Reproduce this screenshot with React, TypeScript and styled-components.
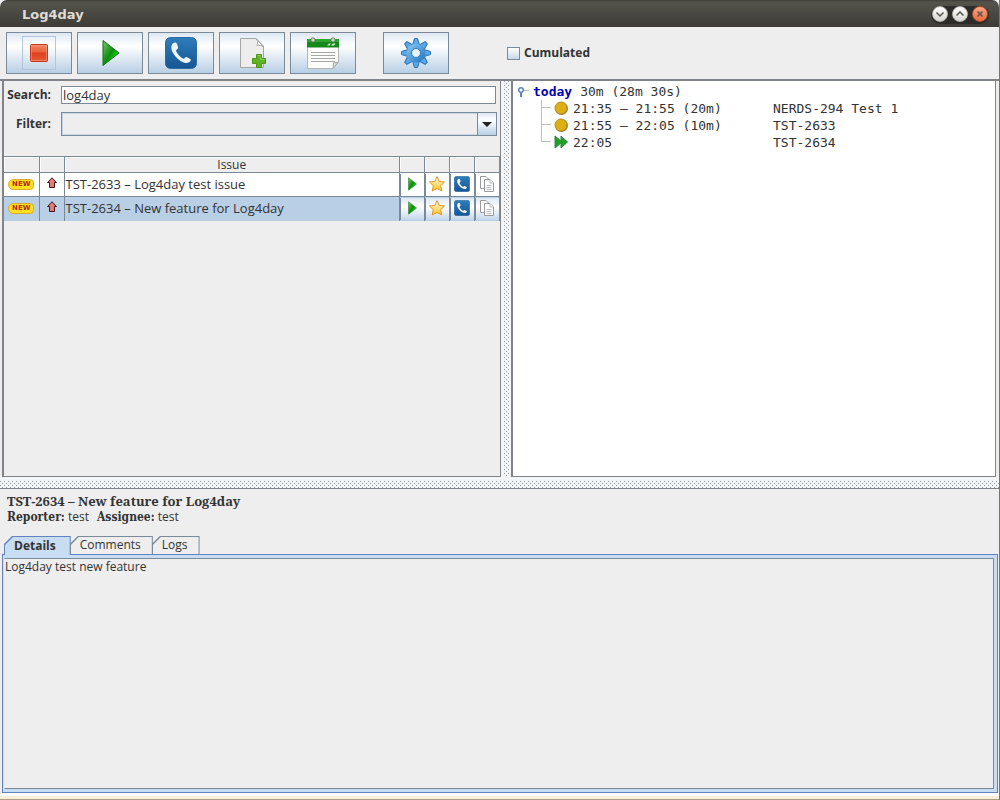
import React, { useState } from "react";
import styled, { createGlobalStyle, css } from "styled-components";

const line = "#7a8a99";
const dark = "#808488";
const buttonFill = "linear-gradient(#dde8f3 0%, #ffffff 32%, #f2f6fa 45%, #b8cfe5 100%)";
const dots = css`
  background-color: #f4f5f7;
  background-image: conic-gradient(from 270deg at 1px 1px, #8d949c 90deg, transparent 0),
    conic-gradient(from 270deg at 1px 1px, #8d949c 90deg, transparent 0);
  background-size: 4px 4px;
  background-position: 0 0, 2px 2px;
`;

const GlobalStyle = createGlobalStyle`
  *, *::before, *::after { box-sizing: border-box; }
  body { margin: 0; background: #eeeeee; }
  button, input, select, table { font: inherit; color: inherit; }
  button { padding: 0; border: 0; background: none; }
  svg { display: block; flex: none; }
`;

const Window = styled.div`
  min-height: 100vh;
  display: flex;
  flex-direction: column;
  background: #eeeeee;
  color: #333333;
  font: 13px/16px "Open Sans", "Noto Sans", sans-serif;
  border-right: 1px solid #77786a;
`;

const TitleBar = styled.header`
  height: 27px;
  padding: 2px 10px 0 22px;
  display: flex;
  align-items: center;
  justify-content: space-between;
  background: linear-gradient(#3e3d38 0%, #54534b 8%, #3c3b37 100%);
  border-top-right-radius: 7px;
  border-top-left-radius: 7px;
`;

const WindowTitle = styled.h1`
  margin: 0;
  color: #dfdbd2;
  font: bold 13px/16px "DejaVu Sans", sans-serif;
`;

const WindowControls = styled.div`
  display: flex;
  gap: 4px;
  padding: 0 1px 2px;
  border-radius: 10px;
  background: #2d2c29;
`;

const WindowButton = styled.button<{ $close?: boolean }>`
  width: 16px;
  height: 16px;
  border-radius: 50%;
  border: 1px solid ${(p) => (p.$close ? "#b4502c" : "#b5b3ab")};
  background: ${(p) => (p.$close ? "linear-gradient(#f9a887, #ea6a3e)" : "linear-gradient(#ffffff, #d8d6d0)")};
`;

const Toolbar = styled.div`
  display: flex;
  align-items: center;
  gap: 5px;
  height: 54px;
  padding: 0 6px;
  border-bottom: 2px solid ${dark};
`;

const ToolButton = styled.button<{ $apart?: boolean }>`
  width: 66px;
  height: 42px;
  margin-left: ${(p) => (p.$apart ? "22px" : "0")};
  display: flex;
  align-items: center;
  justify-content: center;
  border: 1px solid ${line};
  background: ${buttonFill};
`;

const FocusFrame = styled.span`
  display: flex;
  align-items: center;
  justify-content: center;
  width: 34px;
  height: 34px;
  border: 1px solid #b4c4dc;
`;

const CheckLabel = styled.label`
  display: flex;
  align-items: center;
  gap: 4px;
  margin-left: 53px;
  font-weight: bold;
  font-size: 12px;
`;

const CheckBox = styled.input`
  appearance: none;
  width: 13px;
  height: 13px;
  margin: 0;
  border: 1px solid ${line};
  background: linear-gradient(#ffffff, #c5d7e9);
  &:checked { background: #6382bf; }
`;

const SplitPane = styled.main`
  display: flex;
  height: 396px;
  padding: 0 3px 0 2px;
`;

const IssuePane = styled.section`
  flex: 1 1 50%;
  min-width: 0;
  border: solid ${dark};
  border-width: 0 1px 1px 2px;
`;

const VerticalDivider = styled.div`
  width: 10px;
  border: solid #f4f5f7;
  border-width: 0 1px 0 3px;
  ${dots}
`;

const TreePane = styled.section`
  flex: 1 1 calc(50% - 14px);
  min-width: 0;
  padding: 2px 0;
  border: solid ${dark};
  border-width: 0 1px 1px 2px;
  background: #ffffff;
  color: #333333;
  font: 13px/17px "DejaVu Sans Mono", monospace;
`;

const SearchForm = styled.form`
  display: grid;
  grid-template-columns: 47px 1fr;
  align-items: center;
  column-gap: 10px;
  row-gap: 8px;
  padding: 5px 3px 20px 0;
`;

const FieldLabel = styled.label`
  text-align: right;
  font-weight: bold;
  font-size: 12px;
  line-height: 18px;
`;

const SearchInput = styled.input`
  width: calc(100% - 1px);
  height: 18px;
  padding: 0 1px;
  border: 1px solid ${line};
  border-radius: 0;
  background: #ffffff;
  outline: none;
`;

const FilterBox = styled.div`
  position: relative;
  height: 24px;
`;

const FilterSelect = styled.select`
  appearance: none;
  display: block;
  width: 100%;
  height: 24px;
  padding: 0 22px 0 4px;
  border: 1px solid ${line};
  border-radius: 0;
  background: #eeeeee;
  box-shadow: inset 0 0 0 1px #c3d6ea;
`;

const FilterArrow = styled.span`
  position: absolute;
  top: 0;
  right: 0;
  display: flex;
  align-items: center;
  justify-content: center;
  width: 20px;
  height: 24px;
  border: 1px solid ${line};
  background: ${buttonFill};
  pointer-events: none;
`;

const IssueTable = styled.table`
  width: 100%;
  table-layout: fixed;
  border-collapse: collapse;
  th, td { border: 1px solid ${line}; padding: 0; }
  th:first-child, td:first-child { border-left: 0; }
  th {
    height: 16px;
    font-size: 12px;
    font-weight: normal;
    line-height: 14px;
    box-shadow: inset 1px 1px #ffffff;
  }
  tbody tr:last-child td { border-bottom: 0; }
`;

const Col = styled.col<{ $w?: number }>`
  width: ${(p) => (p.$w ? `${p.$w}px` : "auto")};
`;

const IssueRow = styled.tr<{ $selected?: boolean }>`
  height: 24px;
  background: ${(p) => (p.$selected ? "#b8cfe5" : "#ffffff")};
`;

const IssueCell = styled.td`
  && { padding: 0 0 2px 1px; }
  line-height: 18px;
  white-space: nowrap;
  overflow: hidden;
`;

const IconCell = styled.td`
  && { padding-bottom: 3px; }
  svg { margin: 0 auto; }
`;

const RowButton = styled.button<{ $selected?: boolean }>`
  width: 100%;
  height: 22px;
  padding: 0 2px 1px 0;
  display: flex;
  align-items: center;
  justify-content: center;
  border-left: 1px solid ${line};
  background: ${(p) => (p.$selected ? "linear-gradient(#dde8f3, #ffffff 40%, #c3d6ea)" : "#ffffff")};
`;

const TreeList = styled.ul`
  list-style: none;
  margin: 0;
  padding: 0;
`;

const TreeRoot = styled.div`
  display: flex;
  align-items: center;
  height: 17px;
  gap: 8px;
`;

const Today = styled.button`
  display: flex;
  align-items: center;
  gap: 2px;
  padding-left: 4px;
  color: #0000b4;
  font-weight: bold;
`;

const TreeItem = styled.li`
  display: flex;
  align-items: center;
  height: 17px;
  padding-left: 28px;
`;

const Connector = styled.span<{ $last?: boolean }>`
  width: 12px;
  height: 17px;
  border-left: 1px solid #b8bec6;
  background: linear-gradient(#b8bec6, #b8bec6) 0 7px / 9px 1px no-repeat;
  ${(p) => p.$last && "height: 8px; align-self: flex-start;"}
`;

const TimeSpan = styled.span`
  width: 204px;
  padding-left: 4px;
`;

const HorizontalDivider = styled.div`
  height: 12px;
  border: solid #f4f5f7;
  border-width: 4px 0 0;
  border-bottom: 1px solid ${dark};
  ${dots}
`;

const DetailPane = styled.section`
  flex: 1;
  display: flex;
  flex-direction: column;
  padding: 5px 1px 0 2px;
`;

const Summary = styled.div`
  padding-left: 5px;
  font-size: 12px;
  line-height: 15px;
`;

const SummaryTitle = styled.h2`
  margin: 0;
  font: bold 13px/15px "Noto Serif", "DejaVu Serif", serif;
  font-family: "Noto Serif", serif;
`;

const Key = styled.b`
  font: bold 12px/15px "DejaVu Serif Condensed", "DejaVu Serif", serif;
`;

const Person = styled.span`
  margin-right: 8px;
`;

const Tabs = styled.div`
  display: flex;
  height: 18px;
  margin-top: 11px;
  padding-left: 2px;
`;

const Tab = styled.button<{ $active?: boolean }>`
  position: relative;
  z-index: 0;
  height: ${(p) => (p.$active ? "19px" : "18px")};
  margin-right: -1px;
  padding: 0 ${(p) => (p.$active ? "15px" : "12px")} 0 10px;
  background: ${(p) => (p.$active ? "#6382bf" : line)};
  clip-path: polygon(8px 0, 100% 0, 100% 100%, 0 100%, 0 8px);
  font-size: 12px;
  font-weight: ${(p) => (p.$active ? "bold" : "normal")};
  &::before {
    content: "";
    position: absolute;
    z-index: -1;
    inset: 1px 1px 0 1px;
    background: ${(p) => (p.$active ? "#c8ddf2" : "#eeeeee")};
    clip-path: polygon(8px 0, 100% 0, 100% 100%, 0 100%, 0 8px);
  }
`;

const TabFrame = styled.div`
  flex: 1;
  display: flex;
  border: 1px solid #6382bf;
  padding: 3px 3px 3px 1px;
  background: #c8ddf2;
`;

const TabPanel = styled.div`
  flex: 1;
  border: 1px solid ${line};
  border-left-color: #eeeeee;
  background: #eeeeee;
  font-size: 12px;
  line-height: 16px;
`;

const WindowFoot = styled.footer`
  height: 7px;
  border-top: 3px solid #ffffff;
  border-bottom: 1px solid #a99d86;
  background: #fcefd9;
`;

const PlayIcon = ({ size = 32 }: { size?: number }) => (
  <svg width={size} height={size} viewBox="0 0 32 32">
    <defs>
      <linearGradient id="play" x1="0" y1="0" x2="1" y2="1">
        <stop offset="0" stopColor="#7cc86e" />
        <stop offset=".5" stopColor="#089008" />
        <stop offset=".7" stopColor="#19c80e" />
        <stop offset="1" stopColor="#075c06" />
      </linearGradient>
    </defs>
    <path d="M9 3.500L25 16L9 28.500Z" fill="url(#play)" stroke="#176b18" />
  </svg>
);

const PhoneIcon = ({ size = 32 }: { size?: number }) => (
  <svg width={size} height={size} viewBox="0 0 32 32">
    <defs>
      <linearGradient id="phone" x1="0" y1="0" x2="0" y2="1">
        <stop offset="0" stopColor="#2f7dbb" />
        <stop offset="1" stopColor="#165593" />
      </linearGradient>
    </defs>
    <rect x=".5" y=".5" width="31" height="31" rx="5" fill="url(#phone)" stroke="#2d6ca2" />
    <path
      d="M8.500 6C6 8 5.500 11.500 8 16C11 21 15.500 24.500 19.500 25.700C22.500 26.400 25 25.500 25.700 23.500C26 22.500 25.500 22 24.500 21.500L22 20.300C21 19.800 20.500 20 20 20.700C19.300 21.700 18.500 22 17.500 21.300C15 19.800 12.500 17 11.300 14.500C10.800 13.300 11.300 12.800 12.200 12.300C13 11.800 13.200 11 13 10L12 7C11.500 5.300 10 5 8.500 6Z"
      fill="#eef6fc"
    />
  </svg>
);

const StopIcon = () => (
  <svg width="20" height="20" viewBox="0 0 20 20">
    <defs>
      <linearGradient id="stop" x1="0" y1="0" x2="0" y2="1">
        <stop offset="0" stopColor="#f28a68" />
        <stop offset=".45" stopColor="#e9603c" />
        <stop offset=".5" stopColor="#dd3f1c" />
        <stop offset="1" stopColor="#ec5b33" />
      </linearGradient>
    </defs>
    <rect x="1.500" y="1.500" width="17" height="17" rx="1" fill="url(#stop)" stroke="#c83719" />
    <rect x="2.500" y="2.500" width="15" height="15" fill="none" stroke="#f49b7e" strokeOpacity=".6" />
  </svg>
);

const NewPageIcon = () => (
  <svg width="32" height="32" viewBox="0 0 32 32">
    <path d="M4.500 1.500H20L27.500 9V30.500H4.500Z" fill="#ededed" stroke="#a4a6a4" />
    <path d="M20 1.500C22.500 4 21.500 6 21 8.500C23.500 8 25.500 8 27.500 10Z" fill="#fff" stroke="#a4a6a4" />
    <path d="M20.500 17.500H25.500V21.500H29.500V26.500H25.500V30.500H20.500V26.500H16.500V21.500H20.500Z" fill="#62b321" stroke="#4c9418" />
    <path d="M21.500 18.500H24.500V22.500H28.500" fill="none" stroke="#8fce58" />
  </svg>
);

const CalendarIcon = () => (
  <svg width="34" height="34" viewBox="0 0 34 34">
    <path d="M1.500 4.500H32.500V26L27 32.500H1.500Z" fill="#fcfcfa" stroke="#b3b6b0" />
    <path d="M1 3H33V11.500H1Z" fill="#16881a" />
    <path d="M1 3H33V6H1Z" fill="#2fa333" />
    <path d="M21 9.500L23 7.500H25L23.500 9.500ZM25 9.500L27 7.500H29.500L28 9.500Z" fill="#d8f2cc" />
    <path d="M5 16.500H29M5 19.500H29M5 22.500H29M5 25.500H29" stroke="#a5a7a2" />
    <path d="M27 32.500L27.500 27L32.500 26Z" fill="#deded8" stroke="#a5a7a2" />
    <g fill="#cfd8cb" stroke="#587a54">
      <rect x="5" y="2" width="4" height="4" rx="1.500" />
      <rect x="25" y="2" width="4" height="4" rx="1.500" />
    </g>
  </svg>
);

const teeth = [0, 45, 90, 135, 180, 225, 270, 315];
const GearIcon = () => (
  <svg width="32" height="32" viewBox="0 0 32 32">
    <defs>
      <linearGradient id="gear" x1="0" y1="0" x2="1" y2="1">
        <stop offset="0" stopColor="#8bcaf5" />
        <stop offset="1" stopColor="#1e73c4" />
      </linearGradient>
    </defs>
    <g fill="#5aa8e6" stroke="#2b72b8">
      {teeth.map((a) => (
        <path key={a} d="M12.500 8L14.500 1.500H17.500L19.500 8Z" transform={`rotate(${a} 16 16)`} />
      ))}
    </g>
    <circle cx="16" cy="16" r="9.500" fill="url(#gear)" />
    <circle cx="16" cy="16" r="4.500" fill="#e9f1f9" stroke="#2f78bd" />
  </svg>
);

const StarIcon = () => (
  <svg width="18" height="18" viewBox="0 0 18 18">
    <defs>
      <linearGradient id="star" x1="0" y1="0" x2="0" y2="1">
        <stop offset="0" stopColor="#fffbe0" />
        <stop offset="1" stopColor="#ffc61e" />
      </linearGradient>
    </defs>
    <path
      d="M9 1.500L11.200 6.500L16.500 7L12.700 10.700L13.800 16L9 13.500L4.200 16L5.300 10.700L1.500 7L6.800 6.500Z"
      fill="url(#star)"
      stroke="#e8962a"
      strokeLinejoin="round"
    />
  </svg>
);

const CopyIcon = () => (
  <svg width="16" height="16" viewBox="0 0 16 16" fill="#ffffff" stroke="#999b9e">
    <path d="M1.500 .5H7L9.500 3V12.500H1.500Z" />
    <path d="M5.500 3.500H11L14.500 7V15.500H5.500Z" />
    <path d="M11 3.500V7H14.500M7.500 9.500H12.500M7.500 11.500H12.500M7.500 13.500H12.500" stroke="#b8babd" />
  </svg>
);

const NewTag = styled.span`
  display: block;
  width: 26px;
  height: 11px;
  margin: 2px auto 0;
  border: 1px solid #d9ab2d;
  border-radius: 6px 4px 4px 6px;
  background: #ffe01f;
  color: #b52a10;
  font: bold 7px/9px "DejaVu Sans", sans-serif;
  text-align: center;
`;

const PriorityIcon = () => (
  <svg width="12" height="12" viewBox="0 0 12 12">
    <path d="M6 .8L10.500 5.500H8.500V10.500H3.500V5.500H1.500Z" fill="#e67a7a" stroke="#3f1717" />
  </svg>
);

const CoinIcon = () => (
  <svg width="16" height="16" viewBox="0 0 16 16">
    <circle cx="8.500" cy="7.500" r="6.500" fill="#8e8148" />
    <circle cx="8" cy="7" r="6" fill="#dcb015" stroke="#b79019" />
  </svg>
);

const ForwardIcon = () => (
  <svg width="16" height="16" viewBox="0 0 16 16">
    <path d="M2 1L8 6V1L14.500 7L8 13V8L2 13Z" fill="#18a321" stroke="#3f7d48" />
  </svg>
);

const HandleIcon = () => (
  <svg width="14" height="14" viewBox="0 0 14 14" fill="none" stroke="#6382bf">
    <circle cx="4" cy="5" r="2.300" strokeWidth="1.500" />
    <path d="M4 7V12" strokeWidth="2" />
    <path d="M7 5.500H12" stroke="#b8c4d8" />
  </svg>
);

const Glyph = ({ d }: { d: string }) => (
  <svg width="14" height="14" viewBox="0 0 14 14" fill="none" stroke="#55534e" strokeWidth="1.500">
    <path d={d} />
  </svg>
);

const issues = [
  { key: "TST-2633", title: "Log4day test issue" },
  { key: "TST-2634", title: "New feature for Log4day" },
];

const entries = [
  { time: "21:35 – 21:55 (20m)", issue: "NERDS-294 Test 1" },
  { time: "21:55 – 22:05 (10m)", issue: "TST-2633" },
  { time: "22:05", issue: "TST-2634", running: true },
];

const tabs = ["Details", "Comments", "Logs"];

export default function App() {
  const [search, setSearch] = useState("log4day");
  const [selected, setSelected] = useState("TST-2634");
  const [tab, setTab] = useState("Details");

  return (
    <Window>
      <GlobalStyle />
      <TitleBar>
        <WindowTitle>Log4day</WindowTitle>
        <WindowControls>
          <WindowButton aria-label="Minimize"><Glyph d="M3.500 5.500L7 9L10.500 5.500" /></WindowButton>
          <WindowButton aria-label="Maximize"><Glyph d="M3.500 8.500L7 5L10.500 8.500" /></WindowButton>
          <WindowButton aria-label="Close" $close><Glyph d="M4.500 4.500L9.500 9.500M9.500 4.500L4.500 9.500" /></WindowButton>
        </WindowControls>
      </TitleBar>

      <Toolbar>
        <ToolButton aria-label="Stop"><FocusFrame><StopIcon /></FocusFrame></ToolButton>
        <ToolButton aria-label="Start"><PlayIcon /></ToolButton>
        <ToolButton aria-label="Call"><PhoneIcon /></ToolButton>
        <ToolButton aria-label="New issue"><NewPageIcon /></ToolButton>
        <ToolButton aria-label="Calendar"><CalendarIcon /></ToolButton>
        <ToolButton aria-label="Settings" $apart><GearIcon /></ToolButton>
        <CheckLabel><CheckBox type="checkbox" />Cumulated</CheckLabel>
      </Toolbar>

      <SplitPane>
        <IssuePane>
          <SearchForm onSubmit={(e) => e.preventDefault()}>
            <FieldLabel htmlFor="search">Search:</FieldLabel>
            <SearchInput id="search" value={search} onChange={(e) => setSearch(e.target.value)} />
            <FieldLabel htmlFor="filter">Filter:</FieldLabel>
            <FilterBox>
              <FilterSelect id="filter"><option></option></FilterSelect>
              <FilterArrow>
                <svg width="10" height="5" viewBox="0 0 10 5"><path d="M0 0H10L5 5Z" fill="#222" /></svg>
              </FilterArrow>
            </FilterBox>
          </SearchForm>
          <IssueTable>
            <colgroup>
              <Col $w={35} /><Col $w={25} /><Col /><Col $w={25} /><Col $w={25} /><Col $w={25} /><Col $w={25} />
            </colgroup>
            <thead>
              <tr><th /><th /><th>Issue</th><th /><th /><th /><th /></tr>
            </thead>
            <tbody>
              {issues.map(({ key, title }) => {
                const on = key === selected;
                return (
                  <IssueRow key={key} $selected={on} onClick={() => setSelected(key)}>
                    <IconCell><NewTag>NEW</NewTag></IconCell>
                    <IconCell><PriorityIcon /></IconCell>
                    <IssueCell>{key} – {title}</IssueCell>
                    <td><RowButton $selected={on} aria-label="Start"><PlayIcon size={16} /></RowButton></td>
                    <td><RowButton $selected={on} aria-label="Favourite"><StarIcon /></RowButton></td>
                    <td><RowButton $selected={on} aria-label="Call"><PhoneIcon size={16} /></RowButton></td>
                    <td><RowButton $selected={on} aria-label="Copy"><CopyIcon /></RowButton></td>
                  </IssueRow>
                );
              })}
            </tbody>
          </IssueTable>
        </IssuePane>
        <VerticalDivider />
        <TreePane>
          <TreeRoot><Today><HandleIcon />today</Today><span>30m (28m 30s)</span></TreeRoot>
          <TreeList>
            {entries.map((e) => (
              <TreeItem key={e.time}>
                <Connector $last={e.running} />
                {e.running ? <ForwardIcon /> : <CoinIcon />}
                <TimeSpan>{e.time}</TimeSpan>
                <span>{e.issue}</span>
              </TreeItem>
            ))}
          </TreeList>
        </TreePane>
      </SplitPane>

      <HorizontalDivider />

      <DetailPane>
        <Summary>
          <SummaryTitle>TST-2634 – New feature for Log4day</SummaryTitle>
          <Person><Key>Reporter:</Key> test</Person>
          <Person><Key>Assignee:</Key> test</Person>
        </Summary>
        <Tabs role="tablist">
          {tabs.map((t) => (
            <Tab key={t} role="tab" aria-selected={t === tab} $active={t === tab} onClick={() => setTab(t)}>{t}</Tab>
          ))}
        </Tabs>
        <TabFrame>
          <TabPanel role="tabpanel">Log4day test new feature</TabPanel>
        </TabFrame>
      </DetailPane>
      <WindowFoot />
    </Window>
  );
}
